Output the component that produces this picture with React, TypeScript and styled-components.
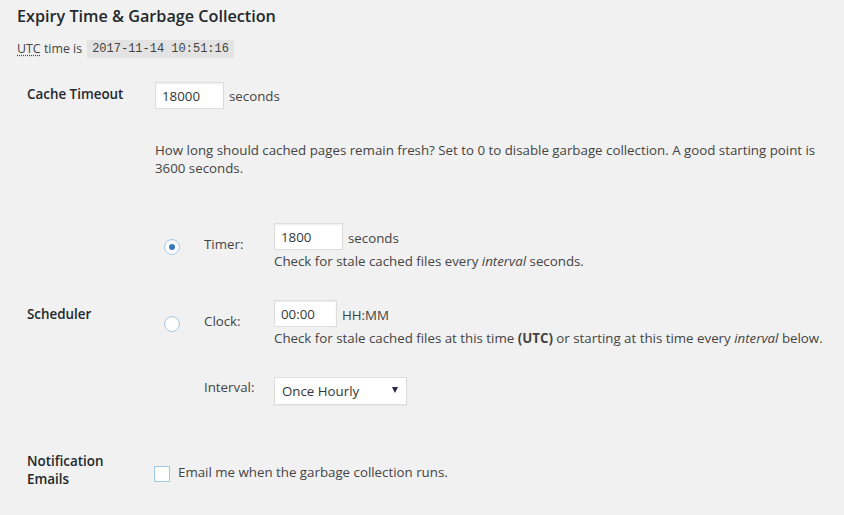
import React from "react";
import styled, { createGlobalStyle } from "styled-components";

const Global = createGlobalStyle`
  html, body { margin: 0; padding: 0; background: #f1f1f1; }
  body {
    font-family: "Open Sans", "Noto Sans", sans-serif;
    font-size: 13px;
    color: #444;
  }
  * { box-sizing: border-box; }
`;

const Page = styled.div`
  width: 844px;
  height: 515px;
  padding: 5px 17px 0 17px;
  overflow: hidden;
`;

const Title = styled.h2`
  margin: 0;
  font-size: 16.2px;
  line-height: 22px;
  font-weight: 600;
  color: #23282d;
`;

const UtcLine = styled.p`
  margin: 13px 0 0 0;
  line-height: 18px;
  font-size: 12.4px;
  color: #444;
  display: flex;
  align-items: center;
  gap: 5px;
`;

const Abbr = styled.abbr`
  text-decoration: underline dotted;
  text-underline-offset: 2px;
`;

const Code = styled.code`
  font-family: "Liberation Mono", monospace;
  font-size: 12px;
  background: #e3e3e3;
  padding: 0 5px;
  line-height: 18px;
  color: #444;
`;

const FormRow = styled.div<{ $mt: number; $align?: string }>`
  display: grid;
  grid-template-columns: 138px 1fr;
  margin-top: ${(p) => p.$mt}px;
  align-items: ${(p) => p.$align || "start"};
`;

const Th = styled.div<{ $pt?: number }>`
  padding-left: 10px;
  padding-top: ${(p) => p.$pt || 0}px;
  font-size: 13.4px;
  font-weight: 600;
  line-height: 18px;
  color: #23282d;
`;

const Td = styled.div`
  display: flex;
  flex-direction: column;
  font-size: 13.3px;
  line-height: 18px;
`;

const Inline = styled.div`
  display: flex;
  align-items: center;
  gap: 5px;
`;

const TextInput = styled.input<{ $w: number; $mb?: number }>`
  width: ${(p) => p.$w}px;
  height: 27px;
  border: 1px solid #ddd;
  box-shadow: inset 0 1px 2px rgba(0, 0, 0, 0.07);
  background: #fff;
  padding: 0 6px;
  margin: 0 0 ${(p) => p.$mb || 0}px 0;
  font-family: inherit;
  font-size: 13.3px;
  color: #32373c;
  outline: none;
`;

const Description = styled.p`
  margin: 32px 0 0 0;
  line-height: 18px;
  max-width: 680px;
`;

const SchedGrid = styled.div`
  display: grid;
  grid-template-columns: 40px 70px 1fr;
  row-gap: 30px;
  margin-left: 9px;
`;

const RadioCell = styled.div`
  display: flex;
  align-items: center;
`;

const Radio = styled.span<{ $checked?: boolean }>`
  width: 16px;
  height: 16px;
  border-radius: 50%;
  border: 1px solid #a9cbe6;
  background: #fff;
  box-shadow: inset 0 1px 2px rgba(0, 0, 0, 0.08);
  display: inline-flex;
  align-items: center;
  justify-content: center;
  &::after {
    content: "";
    display: ${(p) => (p.$checked ? "block" : "none")};
    width: 6px;
    height: 6px;
    border-radius: 50%;
    background: #3a79c0;
  }
`;

const OptLabel = styled.div<{ $align?: string; $pt?: number }>`
  display: flex;
  align-items: ${(p) => p.$align || "center"};
  padding-top: ${(p) => p.$pt || 0}px;
  padding-bottom: ${(p) => (p.$align === "start" ? 0 : 5)}px;
  font-size: 13.3px;
`;

const OptBody = styled.div`
  display: flex;
  flex-direction: column;
  font-size: 13.3px;
  line-height: 18px;
`;

const Select = styled.div`
  width: 133px;
  height: 28px;
  border: 1px solid #ddd;
  background: #fff;
  box-shadow: 0 1px 1px rgba(0, 0, 0, 0.04);
  display: flex;
  align-items: center;
  justify-content: space-between;
  padding: 0 8px 0 7px;
  font-size: 13.3px;
  color: #32373c;
`;

const Caret = styled.span`
  width: 0;
  height: 0;
  border-left: 3.5px solid transparent;
  border-right: 3.5px solid transparent;
  border-top: 6px solid #2b2540;
  margin-top: -2px;
`;

const CheckRow = styled.label`
  display: flex;
  align-items: center;
  gap: 8px;
  padding-top: 14px;
  font-size: 13.3px;
  line-height: 18px;
  margin-left: -1px;
`;

const Checkbox = styled.span`
  width: 16px;
  height: 16px;
  border: 1px solid #9fcbea;
  background: #fff;
  display: inline-block;
  flex: none;
`;

const CheckText = styled.span`
  margin-top: -4px;
`;

export default function App() {
  return (
    <Page>
      <Global />
      <Title>Expiry Time &amp; Garbage Collection</Title>
      <UtcLine>
        <span>
          <Abbr title="Coordinated Universal Time">UTC</Abbr> time is
        </span>
        <Code>2017-11-14 10:51:16</Code>
      </UtcLine>

      <FormRow $mt={24}>
        <Th $pt={3}>Cache Timeout</Th>
        <Td>
          <Inline>
            <TextInput $w={69} defaultValue="18000" />
            <span>seconds</span>
          </Inline>
          <Description>
            How long should cached pages remain fresh? Set to 0 to disable garbage collection. A good
            starting point is 3600 seconds.
          </Description>
        </Td>
      </FormRow>

      <FormRow $mt={46} $align="center">
        <Th>Scheduler</Th>
        <SchedGrid>
          <RadioCell>
            <Radio $checked />
          </RadioCell>
          <OptLabel>Timer:</OptLabel>
          <OptBody>
            <Inline>
              <TextInput $w={69} $mb={2} defaultValue="1800" />
              <span>seconds</span>
            </Inline>
            <span>
              Check for stale cached files every <em>interval</em> seconds.
            </span>
          </OptBody>

          <RadioCell>
            <Radio />
          </RadioCell>
          <OptLabel>Clock:</OptLabel>
          <OptBody>
            <Inline>
              <TextInput $w={63} $mb={2} defaultValue="00:00" />
              <span>HH:MM</span>
            </Inline>
            <span>
              Check for stale cached files at this time <strong>(UTC)</strong> or starting at this
              time every <em>interval</em> below.
            </span>
          </OptBody>

          <span />
          <OptLabel $align="start" $pt={1}>
            Interval:
          </OptLabel>
          <OptBody>
            <Select>
              <span>Once Hourly</span>
              <Caret />
            </Select>
          </OptBody>
        </SchedGrid>
      </FormRow>

      <FormRow $mt={47} $align="start">
        <Th>
          Notification
          <br />
          Emails
        </Th>
        <CheckRow>
          <Checkbox />
          <CheckText>Email me when the garbage collection runs.</CheckText>
        </CheckRow>
      </FormRow>
    </Page>
  );
}
